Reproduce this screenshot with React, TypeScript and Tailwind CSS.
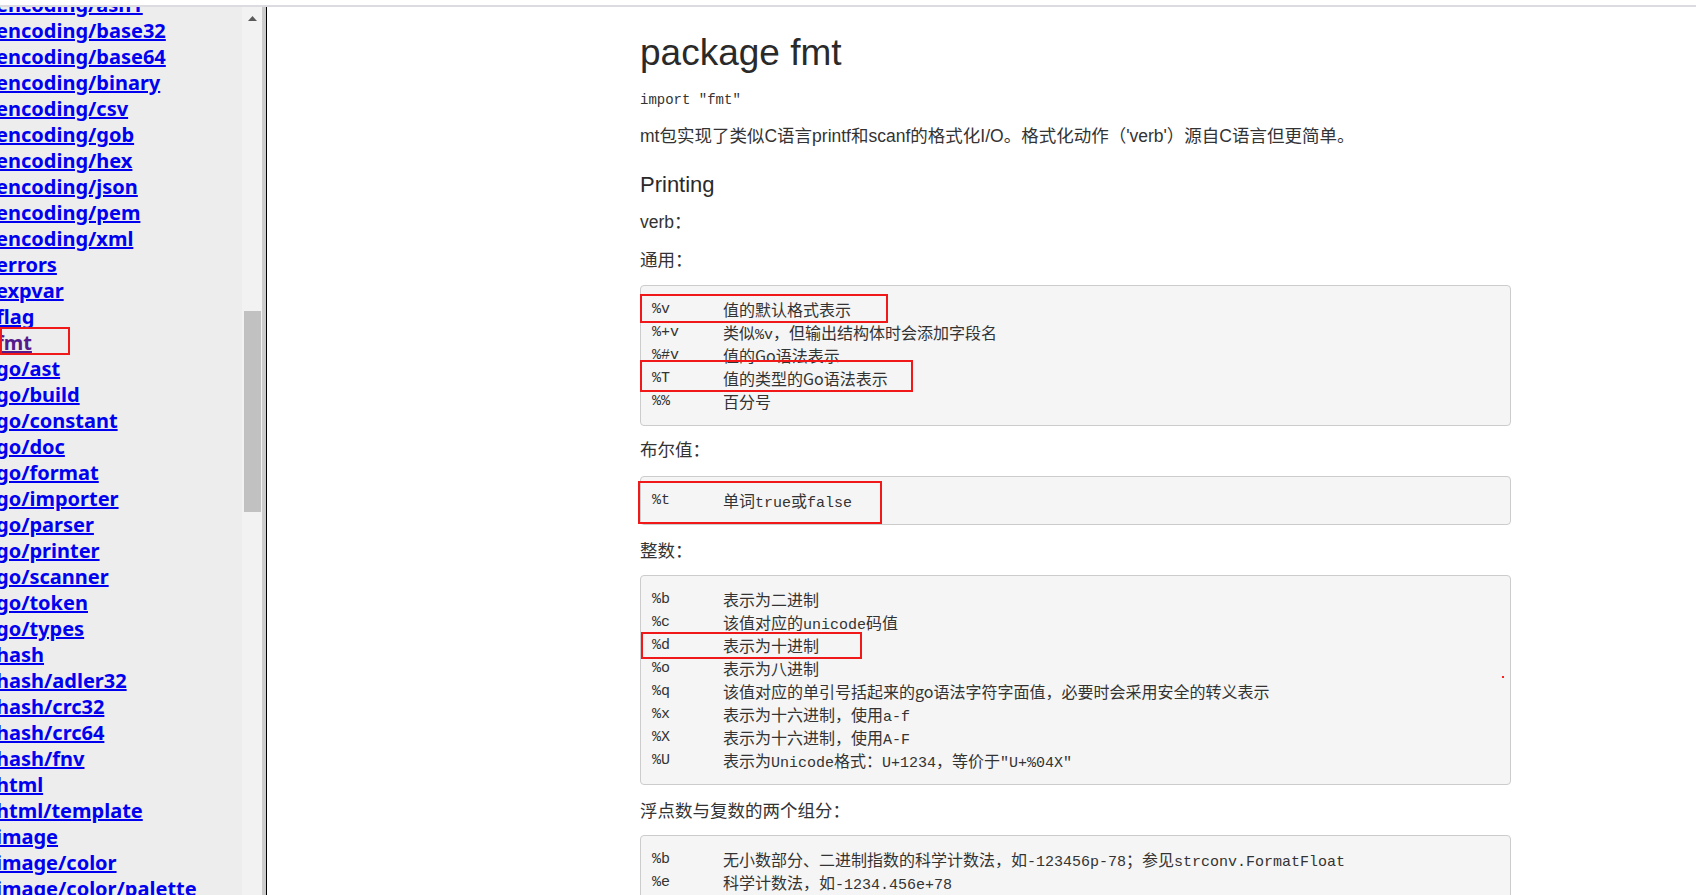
import React from 'react'

type Row = { k: string; d: string; box?: string }

const pkgs = [
  'encoding/asn1',
  'encoding/base32',
  'encoding/base64',
  'encoding/binary',
  'encoding/csv',
  'encoding/gob',
  'encoding/hex',
  'encoding/json',
  'encoding/pem',
  'encoding/xml',
  'errors',
  'expvar',
  'flag',
  'fmt',
  'go/ast',
  'go/build',
  'go/constant',
  'go/doc',
  'go/format',
  'go/importer',
  'go/parser',
  'go/printer',
  'go/scanner',
  'go/token',
  'go/types',
  'hash',
  'hash/adler32',
  'hash/crc32',
  'hash/crc64',
  'hash/fnv',
  'html',
  'html/template',
  'image',
  'image/color',
  'image/color/palette',
  'image/draw',
]

const general: Row[] = [
  { k: '%v', d: '值的默认格式表示', box: 'left-[-12px] top-[-4.5px] w-[248px] h-[29px]' },
  { k: '%+v', d: '类似%v，但输出结构体时会添加字段名' },
  { k: '%#v', d: '值的Go语法表示' },
  { k: '%T', d: '值的类型的Go语法表示', box: 'left-[-12px] top-[-7px] w-[273px] h-[32px]' },
  { k: '%%', d: '百分号' },
]

const bools: Row[] = [
  { k: '%t', d: '单词true或false', box: 'left-[-14px] top-[-8px] w-[244px] h-[43px]' },
]

const ints: Row[] = [
  { k: '%b', d: '表示为二进制' },
  { k: '%c', d: '该值对应的unicode码值' },
  { k: '%d', d: '表示为十进制', box: 'left-[-11px] top-[-2px] w-[221px] h-[27px]' },
  { k: '%o', d: '表示为八进制' },
  { k: '%q', d: '该值对应的单引号括起来的go语法字符字面值，必要时会采用安全的转义表示' },
  { k: '%x', d: '表示为十六进制，使用a-f' },
  { k: '%X', d: '表示为十六进制，使用A-F' },
  { k: '%U', d: '表示为Unicode格式：U+1234，等价于"U+%04X"' },
]

const floats: Row[] = [
  { k: '%b', d: '无小数部分、二进制指数的科学计数法，如-123456p-78；参见strconv.FormatFloat' },
  { k: '%e', d: '科学计数法，如-1234.456e+78' },
  { k: '%E', d: '科学计数法，如-1234.456E+78' },
  { k: '%f', d: '有小数部分但无指数部分，如123.456' },
]

// CJK runs (and "Go") are drawn with the CJK face, a bit bigger than the mono
const cjk = /([\u2000-\u206f\u3000-\u9fff\uff00-\uffef]+|Go|go)/

function Mixed({ text }: { text: string }) {
  const parts = text.split(cjk)
  return (
    <>
      {parts.map((p, i) =>
        i % 2 === 1 ? (
          <span key={i} className="font-['Noto_Sans_CJK_SC',sans-serif] text-[16px]">
            {p}
          </span>
        ) : (
          <React.Fragment key={i}>{p}</React.Fragment>
        )
      )}
    </>
  )
}

const codeTop = {
  sm: 'mt-[12px]',
  md: 'mt-[13px]',
  lg: 'mt-[14px]',
}

function Code({ rows, top = 'sm' }: { rows: Row[]; top?: keyof typeof codeTop }) {
  return (
    <div
      className={`${codeTop[top]} rounded-[4px] border border-[#cccccc] bg-[#f5f5f5] px-[11px] pt-[12px] pb-[12px] font-['Liberation_Mono','Noto_Sans_CJK_SC',monospace] text-[15px] text-[#333333]`}
    >
      {rows.map((r) => (
        <div key={r.k} className="relative flex h-[23px] whitespace-nowrap leading-[23px]">
          <span className="w-[71px] shrink-0">{r.k}</span>
          <span>
            <Mixed text={r.d} />
          </span>
          {r.box && <div className={`absolute border-2 border-[#f01818] ${r.box}`} />}
        </div>
      ))}
    </div>
  )
}

function Text({ children, tight }: { children: React.ReactNode; tight?: boolean }) {
  return (
    <div
      className={
        tight
          ? 'mt-[12px] h-[24px] whitespace-nowrap leading-[24px]'
          : 'mt-[14px] h-[24px] whitespace-nowrap leading-[24px]'
      }
    >
      {children}
    </div>
  )
}

export default function App() {
  return (
    <div className="flex h-[895px] flex-col overflow-hidden bg-white">
      <div className="h-[5px] shrink-0 bg-white" />
      <div className="h-[2px] shrink-0 bg-[#dcdce0]" />
      <div className="flex min-h-0 flex-1">
        {/* package list frame */}
        <div className="w-[242px] shrink-0 overflow-hidden bg-[#ededed]">
          <div className="-ml-[4px] -mt-[15px] font-['Noto_Sans',sans-serif] text-[20px] font-bold">
            {pkgs.map((p) => (
              <div key={p} className="relative h-[26px] whitespace-nowrap leading-[26px]">
                <a
                  href="#"
                  className={
                    p === 'fmt'
                      ? 'text-[#551a8b] underline decoration-2'
                      : 'text-[#0000ee] underline decoration-2'
                  }
                >
                  {p}
                </a>
                {p === 'fmt' && (
                  <div className="absolute left-[4px] top-[-3.5px] h-[28px] w-[70px] border-2 border-[#f01818]" />
                )}
              </div>
            ))}
          </div>
        </div>
        <div className="flex w-[20px] shrink-0 flex-col items-center bg-[#f2f2f2]">
          <svg width="9" height="5" viewBox="0 0 9 5" className="mt-[9px]">
            <polygon points="0,5 4.5,0 9,5" fill="#5a5a5a" />
          </svg>
          <div className="mt-[290px] h-[201px] w-[17px] bg-[#c1c1c1]" />
        </div>
        <div className="w-[4px] shrink-0 bg-[#cbcbcb]" />
        <div className="w-[1px] shrink-0 bg-black" />

        {/* doc frame */}
        <div className="relative min-w-0 flex-1 bg-white pl-[373px] pt-[25px] font-['Liberation_Sans','Noto_Sans_CJK_SC',sans-serif] text-[17.5px] text-[#333333]">
          <div className="w-[871px]">
            <h1 className="h-[41px] text-[37px] font-normal leading-[41px] text-[#2a2a2a]">package fmt</h1>
            <div className="mt-[17px] h-[20px] font-['Liberation_Mono',monospace] text-[14px] leading-[20px]">
              import "fmt"
            </div>
            <Text>mt包实现了类似C语言printf和scanf的格式化I/O。格式化动作（'verb'）源自C语言但更简单。</Text>
            <h2 className="mt-[25px] h-[24px] text-[22px] font-normal leading-[24px] text-[#2a2a2a]">Printing</h2>
            <div className="mt-[13px] h-[24px] leading-[24px]">verb：</div>
            <Text>通用：</Text>
            <Code rows={general} top="md" />
            <Text tight>布尔值：</Text>
            <Code rows={bools} top="lg" />
            <Text>整数：</Text>
            <Code rows={ints} />
            <Text>浮点数与复数的两个组分：</Text>
            <Code rows={floats} />
          </div>
          <div className="absolute left-[1235px] top-[669px] h-[2px] w-[2px] bg-[#ff2020]" />
        </div>
      </div>
    </div>
  )
}
